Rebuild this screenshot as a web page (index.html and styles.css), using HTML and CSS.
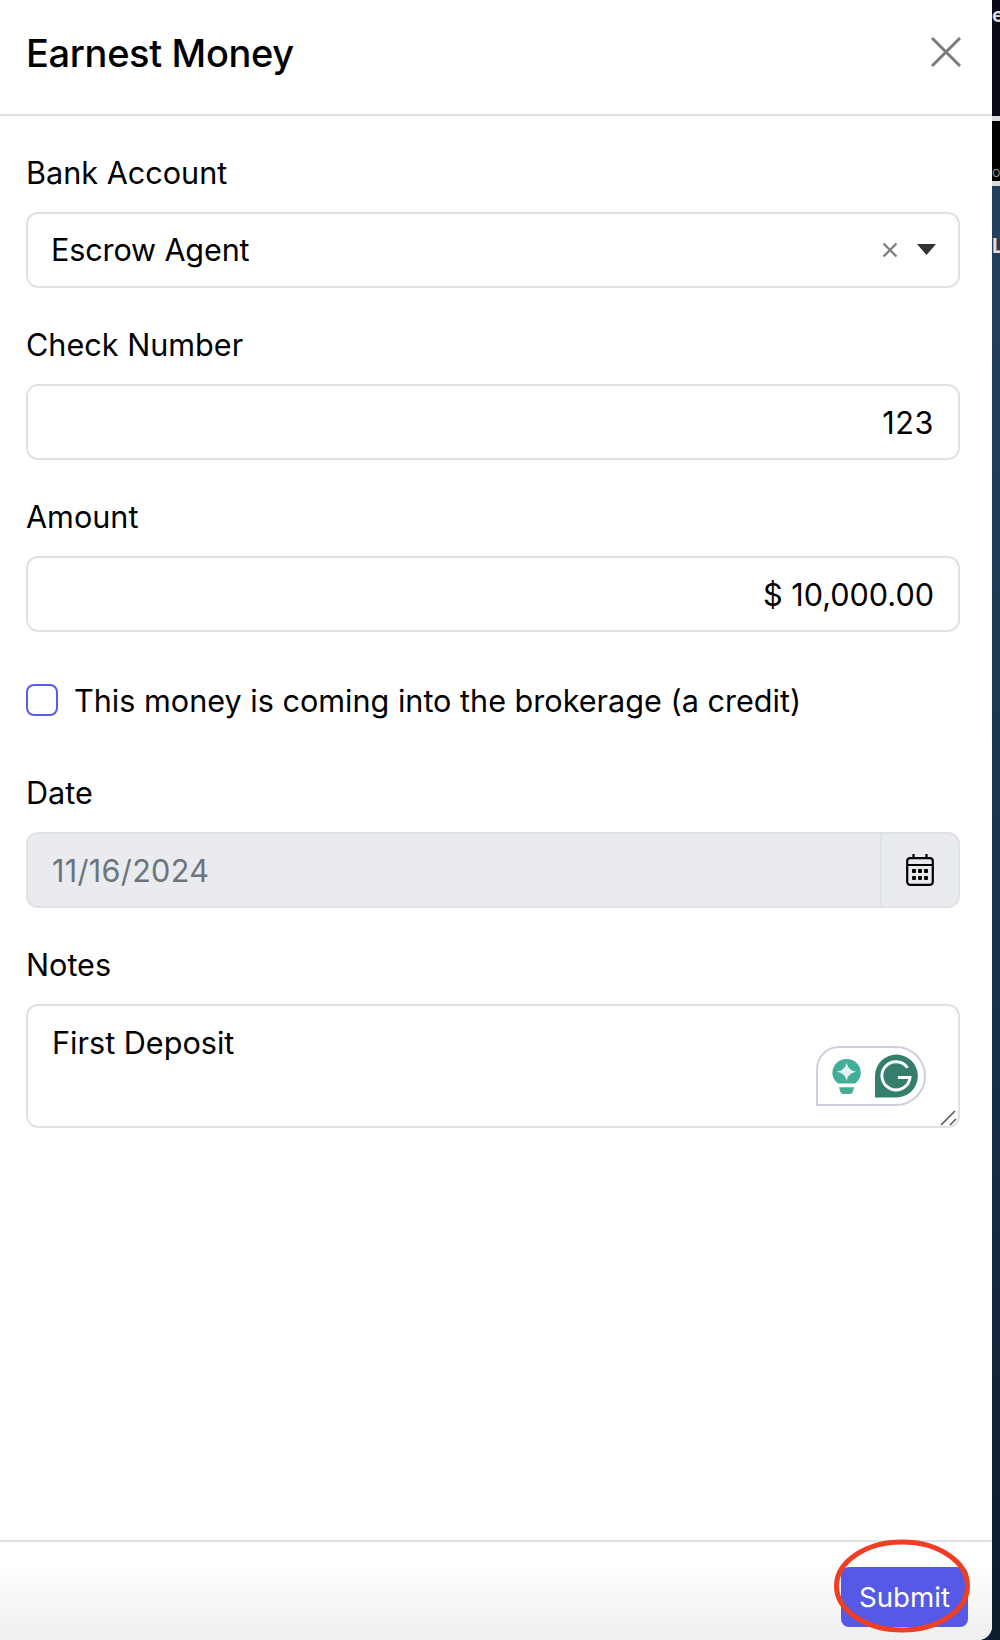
FILE: index.html
```html
<!DOCTYPE html>
<html lang="en">
<head>
<meta charset="utf-8">
<title>Earnest Money</title>
<link rel="stylesheet" href="styles.css">
</head>
<body>
<div class="screen">
  <main class="panel">
    <header class="head">
      <h1 class="title">Earnest Money</h1>
      <svg class="close" width="32" height="32" viewBox="0 0 32 32"><path d="M2 2 30 30M30 2 2 30" fill="none" stroke="#7b7b7b" stroke-width="3"/></svg>
    </header>
    <form class="body">
      <div class="group">
        <div class="label">Bank Account</div>
        <div class="field select">
          <span class="grow select-text">Escrow Agent</span>
          <svg class="clear" width="16" height="16" viewBox="0 0 16 16"><path d="M1.5 1.5 14.5 14.5M14.500 1.5 1.500 14.500" fill="none" stroke="#808080" stroke-width="2.400"/></svg>
          <svg class="caret" width="19" height="11" viewBox="0 0 19 11"><path d="M0 0H19L9.500 11Z" fill="#333"/></svg>
        </div>
      </div>
      <div class="group">
        <div class="label">Check Number</div>
        <div class="field num num-short">123</div>
      </div>
      <div class="group">
        <div class="label">Amount</div>
        <div class="field num">$ 10,000.00</div>
      </div>
      <div class="check">
        <span class="box"></span>
        <span class="check-text">This money is coming into the brokerage (a credit)</span>
      </div>
      <div class="group">
        <div class="label">Date</div>
        <div class="field date">
          <span class="grow date-text">11/16/2024</span>
          <span class="addon">
            <svg width="28" height="32" viewBox="0 0 28 32"><rect x="1.200" y="4.200" width="25.600" height="26.600" rx="3" fill="none" stroke="#000" stroke-width="2.200"/><path d="M1 11H27M7.500 0V5M20.500 0V5" fill="none" stroke="#000" stroke-width="2.200"/><g><rect x="6" y="15" width="4" height="4" rx="1"/><rect x="12" y="15" width="4" height="4" rx="1"/><rect x="18" y="15" width="4" height="4" rx="1"/><rect x="6" y="22" width="4" height="4" rx="1"/><rect x="12" y="22" width="4" height="4" rx="1"/><rect x="18" y="22" width="4" height="4" rx="1"/></g></svg>
          </span>
        </div>
      </div>
      <div class="group">
        <div class="label">Notes</div>
        <div class="field notes">
          First Deposit
          <div class="grammarly">
            <svg width="30" height="36" viewBox="1 0 30 38"><path d="M16 1C7.700 1 1 7.500 1 15.500 1 20.500 3.500 24.500 7.500 27H24.500C28.500 24.500 31 20.500 31 15.500 31 7.500 24.300 1 16 1Z" fill="#41ae95"/><path d="M16 4.500C17 10.500 20.500 13.500 26.500 14.500 20.500 15.500 17 18.500 16 24.500 15 18.500 11.500 15.500 5.500 14.500 11.500 13.500 15 10.500 16 4.500Z" fill="#e4f5f0"/><path d="M8 31H24L22.500 36C22 37.300 21 38 19.500 38H12.500C11 38 10 37.300 9.500 36Z" fill="#41ae95"/></svg>
            <svg width="44" height="44" viewBox="0 0 44 44"><path d="M22 0A22 22 0 0 1 22 44H0V22A22 22 0 0 1 22 0Z" fill="#347e6e"/><path d="M33.500 13.500A14.500 14.500 0 1 0 36 23.500H23.500" fill="none" stroke="#fff" stroke-width="3"/></svg>
          </div>
          <svg class="resize" width="18" height="16" viewBox="0 0 18 16"><path d="M1 15 15 1M10 15 16 9" fill="none" stroke="#555" stroke-width="1.500"/></svg>
        </div>
      </div>
    </form>
    <footer class="foot">
      <button class="submit" type="button">Submit</button>
      <svg class="ring" width="138" height="94" viewBox="0 0 138 94"><ellipse cx="69" cy="47" rx="65.500" ry="44" fill="none" stroke="#ee3f24" stroke-width="5"/></svg>
    </footer>
  </main>
  <aside class="strip">
    <div class="strip-top"><span class="strip-e">e</span></div>
    <div class="strip-logo"><span class="strip-small">OTA</span></div>
    <div class="strip-bottom"><span class="strip-l">L</span></div>
  </aside>
</div>
</body>
</html>
```
FILE: styles.css
```css
* { box-sizing: border-box; }
html, body { margin: 0; padding: 0; }
body { font-family: Inter, "Liberation Sans", sans-serif; color: #000; background: #12263f; }
.screen { display: flex; width: 1000px; height: 1640px; overflow: hidden; background: #0e1e33; }

.panel { width: 992px; height: 1640px; background: #fff; display: flex; flex-direction: column; border-bottom-right-radius: 14px; position: relative; }
.head { height: 116px; flex: none; padding: 0 30px 0 26px; display: flex; align-items: center; justify-content: space-between; border-bottom: 2px solid #dee2e6; }
.title { margin: 0; font-size: 38px; font-weight: 500; line-height: 1; letter-spacing: -.35px; position: relative; top: -4px; }
.close { position: relative; top: -5px; }

.body { flex: 1; padding: 32px 32px 0 26px; }
.group { margin-bottom: 32px; }
.label { font-size: 30.600px; line-height: 48px; padding-top: 1px; margin-bottom: 15px; }
.field { height: 76px; border: 2px solid #dee2e6; border-radius: 12px; font-size: 30.600px; display: flex; align-items: center; padding: 0 24px; }
.grow { flex: 1; }
.select { padding: 0 22px 2px 23px; }
.select-text { letter-spacing: -.15px; }
.clear { margin: 2px 19px 0 0; }
.num { justify-content: flex-end; }
.num-short { letter-spacing: .6px; }

.check { display: flex; align-items: center; gap: 16px; font-size: 30.600px; line-height: 48px; margin: 44px 0 44px; }
.check-text { position: relative; top: 1px; }
.box { width: 32px; height: 32px; border: 2px solid #5a5de6; border-radius: 8px; flex: none; }

.date { background: #eaebef; padding-right: 0; }
.date-text { color: #6c757d; letter-spacing: .3px; }
.addon { width: 78px; height: 100%; border-left: 2px solid #dee2e6; display: flex; align-items: center; justify-content: center; }

.notes { height: 124px; align-items: flex-start; padding-top: 18px; line-height: 38px; position: relative; }
.grammarly { position: absolute; left: 788px; top: 40px; width: 110px; height: 60px; border: 2px solid #cfd0df; border-radius: 26px 34px 34px 0; display: flex; align-items: center; gap: 14px; padding: 0 6px 0 14px; }
.resize { position: absolute; right: 0; bottom: 0; }

.foot { height: 100px; flex: none; border-top: 2px solid #dee2e6; background: linear-gradient(#fff 20%, #efefef); border-bottom-right-radius: 14px; display: flex; justify-content: flex-end; align-items: flex-start; padding: 25px 24px 0 0; position: relative; }
.submit { width: 127px; height: 60px; background: #5659e6; color: #fff; border: 0; border-radius: 8px; font: 27.700px Inter, "Liberation Sans", sans-serif; padding: 0; }
.ring { position: absolute; left: 833px; top: -3px; }

.strip { width: 8px; height: 1640px; display: flex; flex-direction: column; overflow: hidden; background: #dcdcdc; }
.strip-top { height: 116px; flex: none; background: #0a0a18; color: #ddd; font: 700 20px/30px Inter, sans-serif; }
.strip-logo { height: 60px; flex: none; margin-top: 5px; background: #000; color: #999; font: 11px/12px Inter, sans-serif; padding-top: 46px; }
.strip-bottom { flex: 1; margin-top: 5px; background: linear-gradient(#24405f, #1c3a56 30%, #16304a 60%, #0d1b2e); color: #ddd; font: 700 20px/20px Inter, sans-serif; padding-top: 50px; }
.strip-e, .strip-small, .strip-l { display: block; white-space: nowrap; }
```
